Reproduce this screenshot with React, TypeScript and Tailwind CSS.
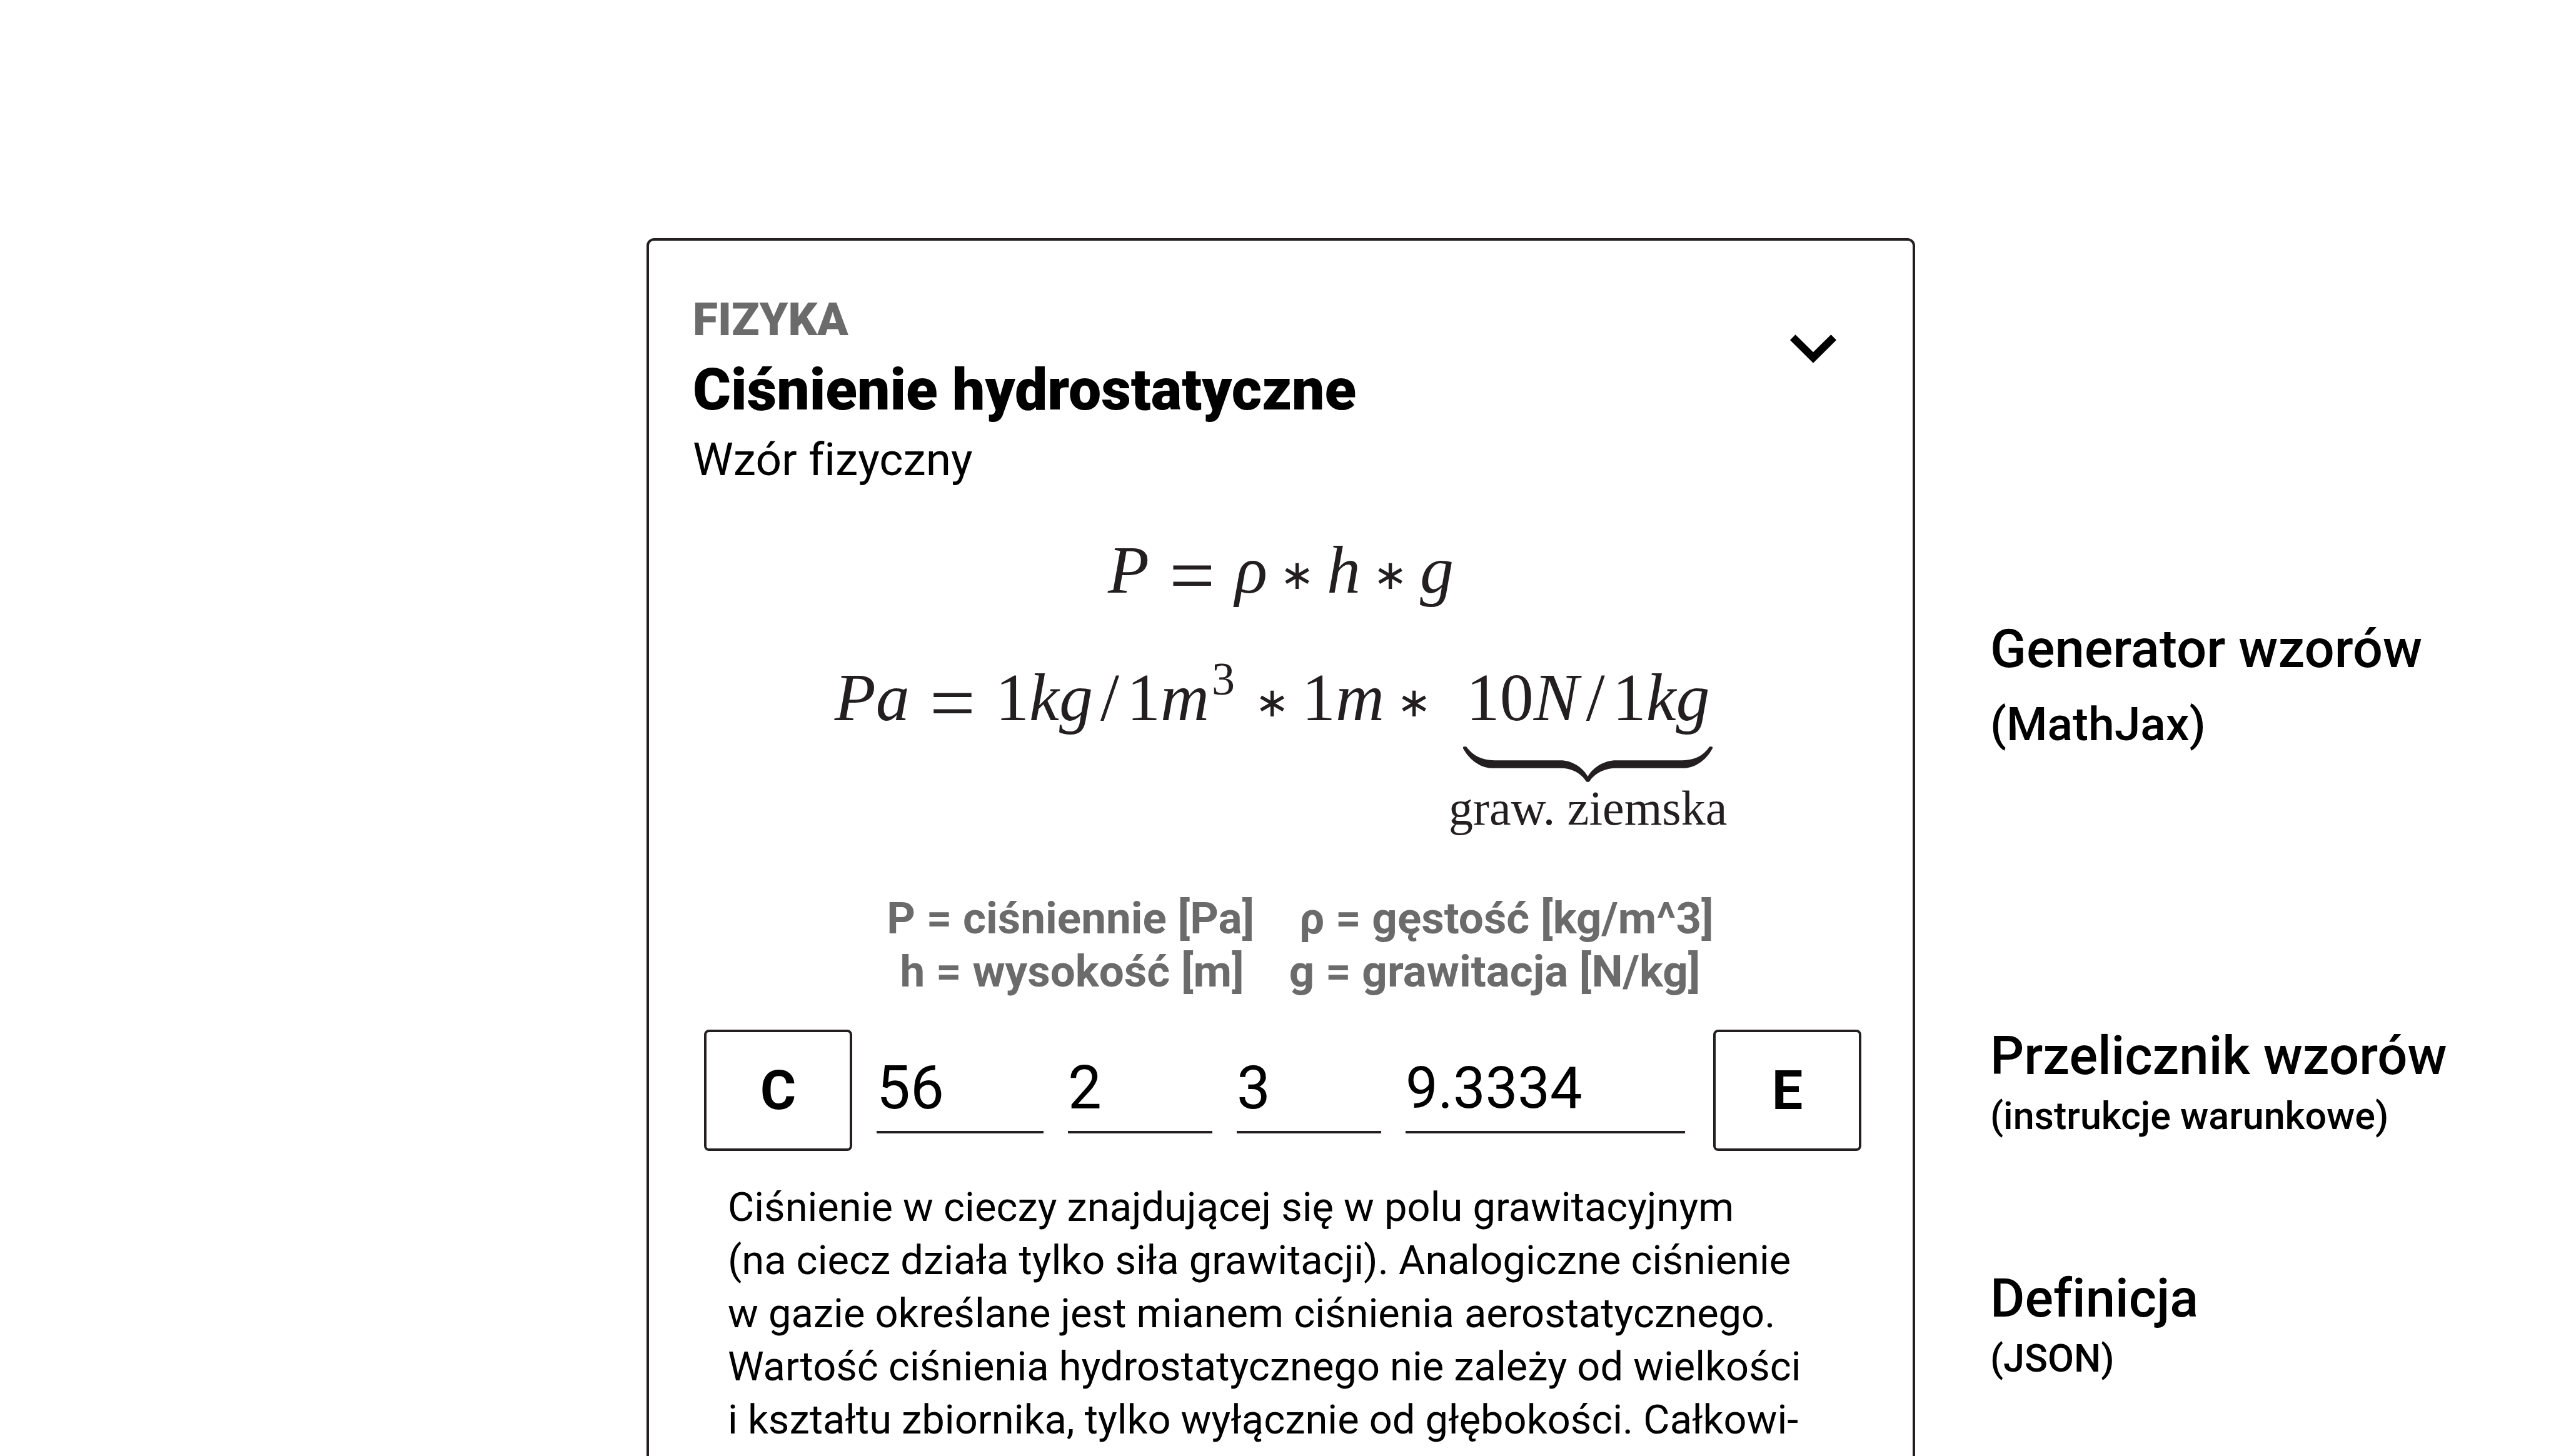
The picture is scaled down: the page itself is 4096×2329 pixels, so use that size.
import type { ReactNode } from "react";

/* Operators are centred on the maths axis, a little above the baseline. */
function Equals() {
  return (
    <span className="mx-8">
      <span className="align-[-16px] text-[130px] leading-[80px] not-italic">=</span>
    </span>
  );
}

function Times() {
  return (
    <span className="mx-5">
      <span className="align-[6px] text-[66px] leading-[80px] not-italic">∗</span>
    </span>
  );
}

function Num({ children }: { children: ReactNode }) {
  return <span className="not-italic">{children}</span>;
}

function Slash() {
  return <span className="mx-3 not-italic">/</span>;
}

function Field({ label, value, className }: { label: string; value: string; className: string }) {
  return (
    <input
      aria-label={label}
      defaultValue={value}
      className={`h-[166px] min-w-0 border-b-4 border-[#231f20] bg-transparent pt-6 outline-none ${className}`}
    />
  );
}

function KeyButton({ label, children }: { label: string; children: ReactNode }) {
  return (
    <button
      type="button"
      aria-label={label}
      className="h-[194px] w-[237px] shrink-0 rounded-lg border-4 border-[#231f20] text-[88px] leading-none font-bold last:ml-auto"
    >
      {children}
    </button>
  );
}

function Note({ title, detail, className }: { title: string; detail: string; className: string }) {
  return (
    <section>
      <h2 className="text-[85px] leading-[96px] font-medium whitespace-nowrap">{title}</h2>
      <p className={`font-medium whitespace-nowrap ${className}`}>{detail}</p>
    </section>
  );
}

export default function App() {
  return (
    <main className="grid h-screen grid-cols-[1034fr_2029fr_1033fr] overflow-hidden bg-white font-['Roboto',sans-serif] text-black [font-variant-ligatures:none]">
      <article className="col-start-2 mt-[381px] h-[2600px] rounded-xl border-4 border-[#231f20] px-[70px] pt-[82px]">
        <header className="flex items-start justify-between">
          <div>
            <p className="text-[73px] leading-[88px] font-black text-[#6b6b6b]">FIZYKA</p>
            <h1 className="mt-1 text-[93px] leading-[130px] font-black">Ciśnienie hydrostatyczne</h1>
            <p className="mt-0.5 text-[73px] leading-[88px]">Wzór fizyczny</p>
          </div>
          <button type="button" aria-label="Zwiń" className="mt-[68px] mr-[52px]">
            <svg viewBox="0 0 312 192" className="h-[46px] w-[74px]">
              <path d="M36 0 156 118 276 0l36 37-156 155L0 37z" fill="currentColor" />
            </svg>
          </button>
        </header>

        <div className="mt-[73px] flex flex-col items-center font-['Liberation_Serif',serif] text-[108px] leading-[120px] text-[#231f20] italic">
          <div className="flex items-baseline">
            <span>P</span>
            <Equals />
            <span>ρ</span>
            <Times />
            <span>h</span>
            <Times />
            <span>g</span>
          </div>
          <div className="mt-[84px] flex items-baseline">
            <span>Pa</span>
            <Equals />
            <Num>1</Num>
            <span>kg</span>
            <Slash />
            <Num>1</Num>
            <span>
              m<sup className="static mr-3 ml-1 align-[41px] text-[74px] leading-[40px] not-italic">3</sup>
            </span>
            <Times />
            <Num>1</Num>
            <span>m</span>
            <Times />
            <div className="ml-2 flex flex-col items-center">
              <div className="flex">
                <Num>10</Num>
                <span>N</span>
                <Slash />
                <Num>1</Num>
                <span>kg</span>
              </div>
              <svg viewBox="133 96 1288 237" preserveAspectRatio="none" className="mt-[18px] h-[57px] w-[399px]">
                <path
                  d="M133 100C133 96 148 96 150 98C185 158 230 188 295 188H637C690 188 750 230 777 296C805 230 865 188 922 188H1265C1325 188 1372 160 1405 98C1408 96 1421 96 1421 100V108C1385 195 1325 241 1265 241H922C870 241 815 270 785 330C783 333 771 333 769 330C740 270 690 241 637 241H290C230 241 170 195 133 108z"
                  fill="currentColor"
                />
              </svg>
              <span className="text-[78px] leading-[84px] not-italic">graw. ziemska</span>
            </div>
          </div>
        </div>

        <div className="mt-[91px] ml-[62px] flex flex-col items-center text-[71px] leading-[85px] font-bold text-[#6b6b6b]">
          <div className="flex gap-18">
            <span>P = ciśniennie [Pa]</span>
            <span>ρ = gęstość [kg/m^3]</span>
          </div>
          <div className="flex gap-18">
            <span>h = wysokość [m]</span>
            <span>g = grawitacja [N/kg]</span>
          </div>
        </div>

        <form className="mt-[51px] mr-3 ml-[18px] flex gap-[39px] text-[96px] leading-none">
          <KeyButton label="Wyczyść">C</KeyButton>
          <Field label="P" value="56" className="w-[267px]" />
          <Field label="h" value="2" className="w-[231px]" />
          <Field label="g" value="3" className="w-[231px]" />
          <Field label="ρ" value="9.3334" className="w-[447px] text-[92px]" />
          <KeyButton label="Oblicz">E</KeyButton>
        </form>

        <p className="mt-12 ml-14 text-[65px] leading-[85px] whitespace-nowrap">
          Ciśnienie w cieczy znajdującej się w polu grawitacyjnym
          <br />
          (na ciecz działa tylko siła grawitacji). Analogiczne ciśnienie
          <br />
          w gazie określane jest mianem ciśnienia aerostatycznego.
          <br />
          Wartość ciśnienia hydrostatycznego nie zależy od wielkości
          <br />
          i kształtu zbiornika, tylko wyłącznie od głębokości. Całkowi-
          <br />
          te ciśnienie jest sumą zewnętrznego i ciśnienia hydro-
        </p>
      </article>

      <aside className="flex flex-col pt-[990px] pl-[120px]">
        <Note title="Generator wzorów" detail="(MathJax)" className="mt-7 text-[75px] leading-[88px]" />
        <div className="mt-[439px]">
          <Note title="Przelicznik wzorów" detail="(instrukcje warunkowe)" className="mt-3 text-[61px] leading-[72px]" />
        </div>
        <div className="mt-52">
          <Note title="Definicja" detail="(JSON)" className="mt-3 text-[61px] leading-[72px]" />
        </div>
      </aside>
    </main>
  );
}
